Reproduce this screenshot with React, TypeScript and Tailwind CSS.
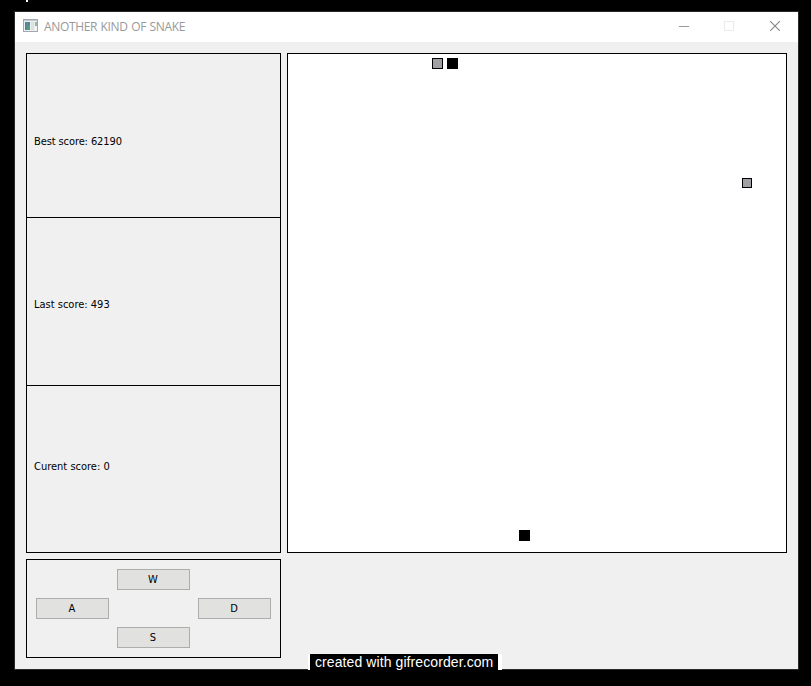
import React from "react";

const label = "font-['DejaVu_Sans_Condensed','DejaVu_Sans',sans-serif] text-[11px] leading-[14px] text-black whitespace-nowrap";

function AppIcon() {
  return (
    <svg className="-mt-px" width="15" height="13" viewBox="0 0 15 13" shapeRendering="crispEdges">
      <rect width="15" height="13" fill="#a3a8ae" />
      <rect x="1" y="1" width="13" height="11" fill="#eceeef" />
      <rect x="1" y="1" width="13" height="1" fill="#c5cbd2" />
      <rect x="2" y="3" width="5" height="8" fill="#4b8b8e" />
      <rect x="2" y="3" width="3" height="4" fill="#5b82a6" />
      <rect x="4" y="6" width="3" height="5" fill="#549b7b" />
      <rect x="8" y="3" width="3" height="8" fill="#dce0e0" />
      <rect x="12" y="3" width="2" height="4" fill="#8fb5a9" />
      <rect x="12" y="7" width="2" height="4" fill="#f7f7f7" />
    </svg>
  );
}

function TitleBar() {
  return (
    <header className="flex h-[30px] items-center bg-white pb-0.5 pl-2">
      <AppIcon />
      <h1 className="mt-0.5 ml-1.5 font-['Open_Sans','Noto_Sans',sans-serif] text-[12px] leading-4 tracking-[-0.35px] [word-spacing:0.8px] whitespace-nowrap text-[#999]">
        ANOTHER KIND OF SNAKE
      </h1>
      <div className="mr-[18px] ml-auto flex items-center gap-[35px]">
        <svg width="10" height="10" shapeRendering="crispEdges">
          <path d="M0 5.5H10" stroke="#999" />
        </svg>
        <svg width="10" height="10" shapeRendering="crispEdges">
          <rect x="0.5" y="0.5" width="9" height="9" fill="none" stroke="#ebebeb" />
        </svg>
        <svg className="ml-px" width="10" height="10">
          <path d="M0 0L10 10M10 0L0 10" stroke="#888" strokeWidth="1.1" />
        </svg>
      </div>
    </header>
  );
}

function Key({ name, place }: { name: string; place: string }) {
  return (
    <button className={`${label} ${place} flex items-center justify-center border border-[#adadad] bg-[#e1e1e0] pt-px pr-px`}>
      {name}
    </button>
  );
}

export default function App() {
  return (
    <div className="flex h-[686px] w-[811px] flex-col overflow-hidden bg-black">
      <div className="ml-[26px] h-[11px] shrink-0">
        <div className="h-0.5 w-0.5 bg-white" />
      </div>
      <main className="relative ml-[14px] flex h-[659px] w-[785px] flex-col border border-[#292929] bg-[#f0f0f0]">
        <TitleBar />
        <div className="flex gap-1.5 px-[11px] pt-[11px]">
          <div className="flex w-[255px] flex-col gap-1.5">
            <section className="flex h-[500px] flex-col border border-black">
              <div className={`${label} flex h-[164px] items-center border-b border-black pt-[13px] pl-[7px] tracking-[-0.1px]`}>
                Best score: 62190
              </div>
              <div className={`${label} flex h-[168px] items-center border-b border-black pt-[6px] pl-[7px]`}>
                Last score: 493
              </div>
              <div className={`${label} flex h-[166px] items-center pb-[4px] pl-[7px]`}>Curent score: 0</div>
            </section>
            <section className="grid h-[99px] grid-cols-[73px_73px_73px] grid-rows-[21px_21px_21px] gap-2 border border-black p-[9px]">
              <Key name="W" place="col-start-2 row-start-1" />
              <Key name="A" place="col-start-1 row-start-2" />
              <Key name="D" place="col-start-3 row-start-2" />
              <Key name="S" place="col-start-2 row-start-3" />
            </section>
          </div>
          <section className="relative h-[500px] w-[500px] border border-black bg-white">
            <i className="absolute top-[4px] left-[144px] size-[11px] border border-black bg-[#a0a0a4]" />
            <i className="absolute top-[4px] left-[159px] size-[11px] bg-black" />
            <i className="absolute top-[124px] left-[454px] size-[10px] border border-black bg-[#a0a0a4]" />
            <i className="absolute top-[476px] left-[231px] size-[11px] bg-black" />
          </section>
        </div>
        <div className="absolute top-[642px] left-[293px] flex h-4 w-[194px] items-center border-r-4 border-l-2 border-white bg-black pl-[5px] font-['Liberation_Sans',Arial,sans-serif] text-[14px] leading-4 tracking-[0.09px] whitespace-nowrap text-white">
          created with gifrecorder.com
        </div>
      </main>
    </div>
  );
}
